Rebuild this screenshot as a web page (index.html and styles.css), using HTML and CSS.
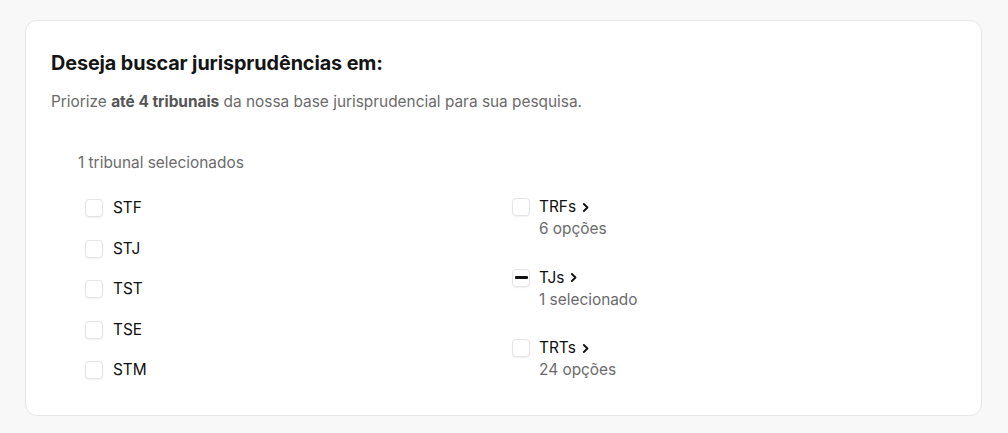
FILE: index.html
```html
<!DOCTYPE html>
<html lang="pt-BR">
<head>
<meta charset="utf-8">
<link rel="stylesheet" href="styles.css">
</head>
<body>
<section class="card">
  <h2 class="title">Deseja buscar jurisprudências em:</h2>
  <p class="subtitle">Priorize <strong>até 4 tribunais</strong> da nossa base jurisprudencial para sua pesquisa.</p>
  <p class="count">1 tribunal selecionados</p>
  <div class="columns">
    <ul class="list">
      <li class="item"><span class="box"></span><span class="name">STF</span></li>
      <li class="item"><span class="box"></span><span class="name">STJ</span></li>
      <li class="item"><span class="box"></span><span class="name">TST</span></li>
      <li class="item"><span class="box"></span><span class="name">TSE</span></li>
      <li class="item"><span class="box"></span><span class="name">STM</span></li>
    </ul>
    <ul class="list groups">
      <li class="group"><span class="box"></span><div class="gtext"><span class="name">TRFs <svg class="chev" viewBox="0 0 10 10"><path d="M3.5 1.8 6.8 5 3.5 8.2" fill="none" stroke="#111" stroke-width="1.7" stroke-linecap="round" stroke-linejoin="round"/></svg></span><span class="sub">6 opções</span></div></li>
      <li class="group"><span class="box partial"><span class="dash"></span></span><div class="gtext"><span class="name">TJs <svg class="chev" viewBox="0 0 10 10"><path d="M3.5 1.8 6.8 5 3.5 8.2" fill="none" stroke="#111" stroke-width="1.7" stroke-linecap="round" stroke-linejoin="round"/></svg></span><span class="sub">1 selecionado</span></div></li>
      <li class="group"><span class="box"></span><div class="gtext"><span class="name">TRTs <svg class="chev" viewBox="0 0 10 10"><path d="M3.5 1.8 6.8 5 3.5 8.2" fill="none" stroke="#111" stroke-width="1.7" stroke-linecap="round" stroke-linejoin="round"/></svg></span><span class="sub">24 opções</span></div></li>
    </ul>
  </div>
</section>
</body>
</html>
```

FILE: styles.css
```css
html, body {
  margin: 0;
  padding: 0;
  background: #f8f8f8;
}
body {
  font-family: Inter, "Noto Sans", sans-serif;
  color: #111;
  padding: 20px 26px 17px 25px;
}
.card {
  box-sizing: border-box;
  width: 957px;
  height: 396px;
  background: #fff;
  border: 1px solid #e6e6e6;
  border-radius: 12px;
  padding: 28px 25px 0 25px;
}
.title {
  margin: 0;
  font-size: 19.8px;
  font-weight: 700;
  line-height: 28px;
  color: #141414;
  letter-spacing: -0.09px;
}
.subtitle {
  margin: 14px 0 0;
  font-size: 15.4px;
  line-height: 22px;
  color: #6b6b6b;
}
.subtitle strong {
  color: #555;
  font-weight: 700;
}
.count {
  margin: 39px 0 0 27px;
  font-size: 15.4px;
  line-height: 22px;
  color: #6b6b6b;
}
.columns {
  display: grid;
  grid-template-columns: 427px 1fr;
  margin-top: 23px;
  padding-left: 34px;
}
.list {
  list-style: none;
  margin: 0;
  padding: 0;
  display: flex;
  flex-direction: column;
  gap: 18.5px;
}
.item {
  display: flex;
  align-items: center;
  gap: 10px;
  height: 22px;
}
.box {
  box-sizing: border-box;
  width: 18px;
  height: 18px;
  flex: none;
  border: 1px solid #e4e4e4;
  border-radius: 4px;
  background: #fff;
  box-shadow: 0 1px 2px rgba(0,0,0,0.06);
  display: flex;
  align-items: center;
  justify-content: center;
}
.name {
  font-size: 15.4px;
  line-height: 22px;
  color: #111;
  display: inline-flex;
  align-items: center;
  gap: 4px;
}
.groups {
  gap: 26.5px;
  margin-top: -1px;
}
.group {
  display: flex;
  align-items: flex-start;
  gap: 9px;
}
.group .box {
  margin-top: 2px;
}
.gtext {
  display: flex;
  flex-direction: column;
}
.sub {
  font-size: 15.4px;
  line-height: 22px;
  color: #6b6b6b;
}
.chev {
  width: 11px;
  height: 11px;
}
.dash {
  width: 13px;
  height: 3px;
  background: #111;
  border-radius: 1px;
}
```
